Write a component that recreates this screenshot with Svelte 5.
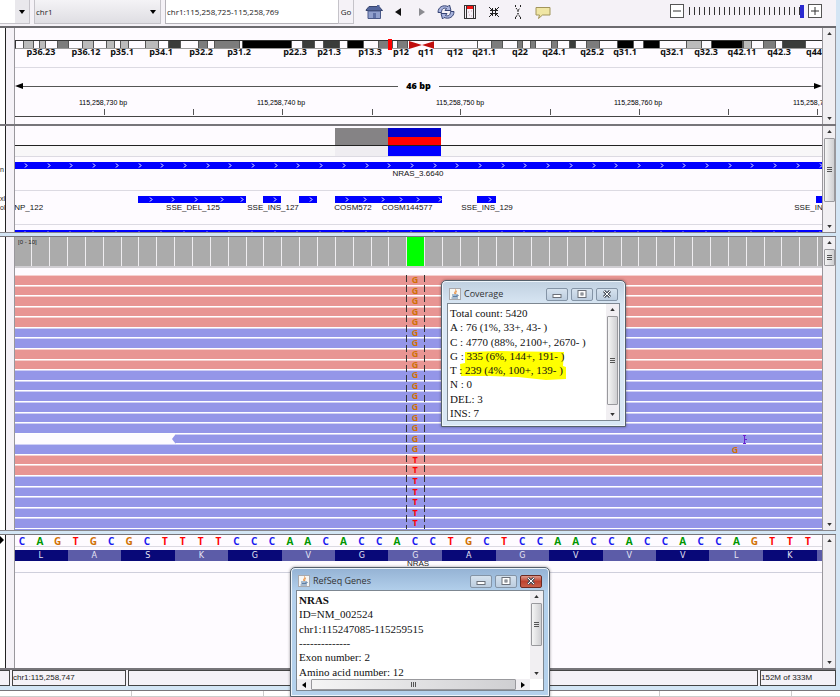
<script lang="ts">
  interface Feature {
    start: number;
    end: number;
    arrows: number[];
  }
  interface Mark {
    x: number;
    text: string;
  }

  // Track units: 807 across the visible locus.
  const SPAN = 807;
  const BASE = 17.86;
  const FIRST = -1.6;

  const pct = (x: number) => `${(x / SPAN) * 100}%`;
  const place = (start: number, end: number) => `left:${pct(start)};width:${pct(end - start)}`;

  let chromosome = $state('chr1');
  let locus = $state('chr1:115,258,725-115,258,769');
  let zoom = $state(22);

  const bands: [number, number, string][] = [
    [7, 18, 'light'], [23, 30, 'light'], [41, 53, 'mid'], [66, 78, 'light'], [90, 99, 'light'],
    [104, 113, 'light'], [129, 143, 'light'], [152, 165, 'dark'], [182, 192, 'mid'], [198, 224, 'mid'],
    [226, 276, 'black'], [286, 299, 'dark'], [307, 324, 'dark'], [331, 348, 'black'], [362, 377, 'mid'],
    [381, 392, 'mid'], [462, 463, 'mid'], [476, 488, 'mid'], [502, 508, 'mid'], [515, 521, 'mid'],
    [536, 543, 'mid'], [554, 561, 'dark'], [571, 585, 'mid'], [602, 619, 'black'], [628, 645, 'black'],
    [671, 687, 'light'], [696, 728, 'black'], [728, 737, 'light'], [748, 761, 'mid'], [767, 791, 'dark'],
  ];

  const bandNames: Mark[] = [
    { x: 26, text: 'p36.23' }, { x: 71, text: 'p36.12' }, { x: 107, text: 'p35.1' }, { x: 146, text: 'p34.1' },
    { x: 186, text: 'p32.2' }, { x: 224, text: 'p31.2' }, { x: 280, text: 'p22.3' }, { x: 314, text: 'p21.3' },
    { x: 355, text: 'p13.3' }, { x: 386, text: 'p12' }, { x: 411, text: 'q11' }, { x: 440, text: 'q12' },
    { x: 469, text: 'q21.1' }, { x: 505, text: 'q22' }, { x: 539, text: 'q24.1' }, { x: 577, text: 'q25.2' },
    { x: 610, text: 'q31.1' }, { x: 657, text: 'q32.1' }, { x: 691, text: 'q32.3' }, { x: 727, text: 'q42.11' },
    { x: 764, text: 'q42.3' }, { x: 799, text: 'q44' },
  ];

  const positions: Mark[] = [
    { x: 88, text: '115,258,730 bp' },
    { x: 266, text: '115,258,740 bp' },
    { x: 445, text: '115,258,750 bp' },
    { x: 623, text: '115,258,760 bp' },
    { x: 802, text: '115,258,770 bp' },
  ];
  const ticks = [89, 178, 267, 357, 445, 535, 624, 713, 802];

  const wholeGene: Feature = {
    start: 0,
    end: SPAN,
    arrows: Array.from({ length: 36 }, (_, i) => 9 + i * 22.7),
  };
  const mutations: Feature[] = [
    { start: 123, end: 231, arrows: [134, 156, 179, 205, 225] },
    { start: 248, end: 266, arrows: [258] },
    { start: 284, end: 302, arrows: [294] },
    { start: 320, end: 427, arrows: [330, 348, 366, 384, 401, 423] },
    { start: 462, end: 481, arrows: [473] },
    { start: 801, end: 807, arrows: [] },
  ];
  const mutationNames: Mark[] = [
    { x: 11, text: 'SNP_122' }, { x: 178, text: 'SSE_DEL_125' }, { x: 258, text: 'SSE_INS_127' },
    { x: 338, text: 'COSM572' }, { x: 392, text: 'COSM144577' }, { x: 472, text: 'SSE_INS_129' },
    { x: 805, text: 'SSE_INS_130' },
  ];

  const sequence = [...'CAGTGCGCTTTTCCCAACACCACCTGCTCCAACCACCACCAGTTT'];
  const aminoAcids = [...'LASKGVGGAGVVVLK '];
  const dividers = Array.from({ length: 46 }, (_, i) => FIRST + i * BASE).slice(1);

  // r = negative strand colour, b = positive strand colour
  const reads = [...'rrrrrbbrrbbbbbbbbrrbbbbb'].map((strand, i) => ({
    strand,
    base: i < 17 ? 'G' : 'T',
    start: i === 15 ? 157 : 0,
  }));

  const coverage = [
    'Total count: 5420',
    'A : 76 (1%, 33+, 43- )',
    'C : 4770 (88%, 2100+, 2670- )',
    'G : 335 (6%, 144+, 191- )',
    'T : 239 (4%, 100+, 139- )',
    'N : 0',
    'DEL: 3',
    'INS: 7',
  ];
  const gene = ['ID=NM_002524', 'chr1:115247085-115259515', '--------------', 'Exon number: 2', 'Amino acid number: 12'];
</script>

{#snippet bar(feature: Feature)}
  <div class="bar" style={place(feature.start, feature.end)}></div>
  {#each feature.arrows as x}
    <svg class="chevron" style={`left:${pct(x)}`} viewBox="0 0 4 5"><path d="M1 0.5 3 2.5 1 4.5" /></svg>
  {/each}
{/snippet}

{#snippet scrollbar(thumb: string)}
  <div class="scroll {thumb}">
    <svg viewBox="0 0 6 4"><path d="M0 4 3 0 6 4Z" /></svg>
    {#if thumb !== 'none'}<div class="thumb"><i></i></div>{/if}
    <svg class="last" viewBox="0 0 6 4"><path d="M0 0H6L3 4Z" /></svg>
  </div>
{/snippet}

{#snippet titlebar(title: string)}
  <header>
    <svg class="java" viewBox="0 0 12 12">
      <rect x="0.5" y="0.5" width="11" height="11" fill="#f7f7f5" stroke="#a9a9ad" />
      <path d="M6.500 1.500C8 3 4.500 4 6 6M7.800 3C6.300 4 7.200 5 6.500 6" fill="none" stroke="#e8842c" />
      <path d="M3 7H8V8.500H3.500M8 7C10 6.500 9.500 8.500 7.500 8.500M2.500 10H9" fill="none" stroke="#5b7ea6" />
    </svg>
    <h2>{title}</h2>
    <button aria-label="Minimize"><svg viewBox="0 0 10 8"><rect x="1" y="4.500" width="8" height="3" /></svg></button>
    <button aria-label="Maximize"><svg viewBox="0 0 10 8"><rect x="1" y="0.500" width="8" height="7" /><rect x="4" y="3" width="2" height="2" /></svg></button>
    <button class="close" aria-label="Close">
      <svg viewBox="0 0 10 8"><path class="edge" d="M2 1 8 7M8 1 2 7" /><path class="cross" d="M2 1 8 7M8 1 2 7" /></svg>
    </button>
  </header>
{/snippet}

<div class="app">
  <nav class="toolbar">
    <div class="field genome">
      <select aria-label="Genome"><option></option></select>
      <svg viewBox="0 0 6 4"><path d="M0 0H6L3 4Z" /></svg>
    </div>
    <div class="field chromosome">
      <select aria-label="Chromosome" bind:value={chromosome}><option>chr1</option></select>
      <svg viewBox="0 0 6 4"><path d="M0 0H6L3 4Z" /></svg>
    </div>
    <input class="locus" type="text" aria-label="Locus" bind:value={locus} />
    <button class="go">Go</button>
    <div class="tools">
      <button aria-label="Home">
        <svg viewBox="0 0 18 16">
          <path d="M1 6 4 2.500H14L17.500 6.500H1Z" fill="#52659c" stroke="#39466f" />
          <path d="M12 1H14.500V4H12Z" fill="#52659c" />
          <path d="M3 7H15.500V14.500H3Z" fill="#91a0cd" stroke="#4a5989" />
          <path d="M8 9H11V14H8Z" fill="#5f70a5" />
        </svg>
      </button>
      <button aria-label="Back"><svg viewBox="0 0 18 16"><path d="M6 8 12 4V12Z" fill="#111" /></svg></button>
      <button aria-label="Forward"><svg viewBox="0 0 18 16"><path d="M12 8 6 4V12Z" fill="#8b8b90" /></svg></button>
      <button aria-label="Refresh">
        <svg viewBox="0 0 18 16" fill="#a8b3dd" stroke="#374575">
          <path d="M1 8.500C1 3 6 .5 11 2.500L12.500 1 14 6.500 8 6.500 9.500 4.500C6.500 3.500 4.500 5 4.500 8.500Z" />
          <path d="M17 7.500C17 13 12 15.500 7 13.500L5.500 15 4 9.500H10L8.500 11.500C11.500 12.500 13.500 11 13.500 7.500Z" />
        </svg>
      </button>
      <button aria-label="Region of interest">
        <svg viewBox="0 0 18 16">
          <rect x="3.500" y="1.500" width="11" height="13" fill="#f6f2f8" stroke="#333" />
          <path d="M5.500 2V14.500M12.500 2V14.500" stroke="#333" />
          <rect x="6" y="2" width="6" height="3" fill="#f21414" />
          <path d="M7 8H8M10 7H11M8 11H9M10 12H11" stroke="#c8a0b0" />
        </svg>
      </button>
      <button aria-label="Fit to window">
        <svg viewBox="0 0 18 16" fill="none" stroke="#222">
          <path d="M4 3 7.500 6.500M14 3 10.500 6.500M4 13 7.500 9.500M14 13 10.500 9.500M5 6.500H7.500V4M13 6.500H10.500V4M5 9.500H7.500V12M13 9.500H10.500V12M7.500 6.500H10.500V9.500H7.500Z" />
        </svg>
      </button>
      <button aria-label="Popup behaviour">
        <svg viewBox="0 0 18 16" fill="none" stroke="#222">
          <path d="M6.500 1V3M11.500 1V3M7 4 9 6.500 11 4M9 6V10M7 13 9 9.500 11 13M6.500 13V15M11.500 13V15" stroke-dasharray="2 1" />
        </svg>
      </button>
      <button aria-label="Comment">
        <svg viewBox="0 0 18 16"><path d="M3 3.500H17V11H9.500L5.500 14.500 6.500 11H3Z" fill="#f0e6a4" stroke="#a2955a" /></svg>
      </button>
    </div>
    <div class="zoom">
      <button aria-label="Zoom out"><svg viewBox="0 0 12 12"><path d="M2 6H10" /></svg></button>
      <input type="range" min="0" max="22" aria-label="Zoom" bind:value={zoom} />
      <button aria-label="Zoom in"><svg viewBox="0 0 12 12"><path d="M2 6H10M6 2V10" /></svg></button>
    </div>
  </nav>

  <section class="panel header">
    <div class="names"></div>
    <div class="gutter"></div>
    <div class="tracks">
      <div class="ideogram">
        <div class="chromatid">
          {#each bands as [start, end, shade]}
            <div class="band {shade}" style={place(start, end)}></div>
          {/each}
          <svg class="centromere" style={place(393, 419)} viewBox="0 0 26 8" preserveAspectRatio="none">
            <path d="M0 0H26V8H0Z" fill="#fefbff" /><path d="M0 0 13 4 0 8ZM26 0 13 4 26 8Z" fill="#c00d0d" />
          </svg>
          <div class="here" style={place(372, 376)}></div>
        </div>
        {#each bandNames as name}
          <span class="label" style={`left:${pct(name.x)}`}>{name.text}</span>
        {/each}
      </div>
      <div class="ruler">
        <div class="span">
          <svg viewBox="0 0 8 6"><path d="M0 3 8 0V6Z" /></svg>
          <i></i><b>46 bp</b><i></i>
          <svg viewBox="0 0 8 6"><path d="M8 3 0 0V6Z" /></svg>
        </div>
        <div class="scale">
          {#each positions as pos}
            <span class="label" style={`left:${pct(pos.x)}`}>{pos.text}</span>
          {/each}
          {#each ticks as x}
            <i class="tick" style={`left:${pct(x)}`}></i>
          {/each}
        </div>
      </div>
    </div>
    {@render scrollbar('none')}
  </section>

  <section class="panel features">
    <div class="names">
      <span class="n1">n</span>
      <span class="n2">xl</span>
      <span class="n3">ol</span>
    </div>
    <div class="gutter"></div>
    <div class="tracks">
      <div class="heat">
        <div class="grey" style={place(320, 373)}></div>
        <div class="hot" style={place(373, 426)}></div>
      </div>
      <div class="row">
        {@render bar(wholeGene)}
        <span class="label" style={`left:${pct(403)}`}>NRAS_3.6640</span>
      </div>
      <div class="row">
        {#each mutations as feature}
          {@render bar(feature)}
        {/each}
        {#each mutationNames as name}
          <span class="label" style={`left:${pct(name.x)}`}>{name.text}</span>
        {/each}
      </div>
      <div class="row cut">{@render bar(wholeGene)}</div>
    </div>
    {@render scrollbar('mid')}
  </section>

  <section class="panel alignments">
    <div class="names"></div>
    <div class="gutter"></div>
    <div class="tracks">
      <div class="depth">
        {#each dividers as x}
          <i style={`left:${pct(x)}`}></i>
        {/each}
        <div class="variant" style={place(392, 409)}></div>
        <span>[0 - 10]</span>
      </div>
      <div class="reads">
        {#each reads as read}
          <div class="read">
            <div class="body {read.strand}" class:tip={read.start > 0} style={`margin-left:${pct(read.start)}`}></div>
            <b class={read.base} style={`left:${pct(400)}`}>{read.base}</b>
          </div>
        {/each}
        <div class="guides" style={place(391, 410)}></div>
        <svg class="insertion" style={`left:${pct(728)}`} viewBox="0 0 4 9"><path d="M0 .5H3M0 8.500H3M1.500 0V9M2 4.500H4" /></svg>
        <b class="G mismatch" style={`left:${pct(720)}`}>G</b>
      </div>
      <div class="more"></div>
    </div>
    {@render scrollbar('top')}
  </section>

  <section class="panel sequence">
    <div class="names"><svg class="strand" viewBox="0 0 4 8"><path d="M0 0 4 4 0 8Z" /></svg></div>
    <div class="gutter"></div>
    <div class="tracks">
      <div class="bases">
        {#each sequence as base, i}
          <b class={base} style={`left:${pct(7 + i * BASE)}`}>{base}</b>
        {/each}
      </div>
      <div class="acids">
        {#each aminoAcids as acid, i}
          <span style={place(i * 53.5 - 1, (i + 1) * 53.5 - 1)}>{acid}</span>
        {/each}
      </div>
      <div class="gene"><span class="label" style={`left:${pct(403)}`}>NRAS</span></div>
    </div>
    {@render scrollbar('none')}
  </section>

  <footer class="status">
    <span class="stub"></span>
    <span class="cursor">chr1:115,258,747</span>
    <span class="message"></span>
    <span class="memory">152M of 333M</span>
  </footer>
  <div class="sheet"></div>

  <article class="dialog coverage">
    {@render titlebar('Coverage')}
    <div class="pane">
      <div class="text">
        <svg class="marker" viewBox="0 0 108 30">
          <path d="M5 2 40 1 104 2 103 16 106 17 106 29 86 30 58 27 30 26 1 26 0 14 5 13Z" />
        </svg>
        {#each coverage as line}<p>{line}</p>{/each}
      </div>
      {@render scrollbar('long')}
    </div>
  </article>

  <article class="dialog refseq">
    {@render titlebar('RefSeq Genes')}
    <div class="pane">
      <div class="text">
        <p><b>NRAS</b></p>
        {#each gene as line}<p>{line}</p>{/each}
      </div>
      {@render scrollbar('short')}
      <div class="hscroll">
        <svg viewBox="0 0 4 6"><path d="M4 0V6L0 3Z" /></svg>
        <div class="thumb"><i></i></div>
        <svg viewBox="0 0 4 6"><path d="M0 0V6L4 3Z" /></svg>
      </div>
    </div>
  </article>
</div>

<style>
  :global(body) {
    background: #d3e5f4;
  }
  .app {
    --paper: #fefbff;
    --chrome: #f5f2f7;
    --line: #dcdae2;
    position: relative;
    display: flex;
    flex-direction: column;
    min-height: 100vh;
    overflow: hidden;
    font: 8px/10px 'Liberation Sans', Arial, sans-serif;
    color: #222;
  }
  button, input, select {
    font: inherit;
    color: inherit;
    margin: 0;
    padding: 0;
    border: 0;
    border-radius: 0;
    background: none;
  }
  svg { display: block; }

  /* toolbar */
  .toolbar {
    display: flex;
    height: 26px;
    margin-right: 4px;
    background: var(--chrome);
    border-bottom: 2px solid #6c6b6f;
    font: 8px/12px 'Open Sans', Tahoma, sans-serif;
  }
  .field {
    position: relative;
    height: 24px;
    border-bottom: 1px solid #c5c3c9;
    border-right: 1px solid #c5c3c9;
    box-sizing: border-box;
    background: linear-gradient(#f4f3f6, #dfdee3);
  }
  .field select {
    appearance: none;
    width: 100%;
    height: 100%;
    padding-left: 1px;
  }
  .field svg {
    position: absolute;
    right: 4px;
    top: 10px;
    width: 6px;
    height: 4px;
    pointer-events: none;
  }
  .genome { width: 30px; background: linear-gradient(90deg, #fff 15px, #e9e8ec 15px); }
  .chromosome { width: 127px; margin-left: 4px; border-left: 1px solid #c5c3c9; }
  .locus {
    width: 173px;
    height: 24px;
    margin-left: 4px;
    box-sizing: border-box;
    padding-left: 1px;
    background: #fff;
    border-left: 1px solid #b5b3b9;
    border-bottom: 1px solid #b5b3b9;
  }
  .go {
    width: 16px;
    height: 24px;
    border: solid #c5c3c9;
    border-width: 0 1px 1px;
  }
  .tools { display: flex; margin-left: 8px; }
  .tools button { width: 24px; height: 23px; display: grid; place-items: center; }
  .tools svg { width: 18px; height: 16px; }
  .zoom {
    display: flex;
    align-items: center;
    gap: 4px;
    margin: 0 14px 0 auto;
    height: 22px;
  }
  .zoom button { border: 1px solid #555; background: #fff; }
  .zoom svg { width: 12px; height: 12px; stroke: #333; }
  .zoom input {
    appearance: none;
    width: 116px;
    height: 14px;
    background: repeating-linear-gradient(90deg, #333 0 1px, transparent 1px 5px) 1px 3px / 111px 8px no-repeat;
  }
  .zoom input::-webkit-slider-thumb {
    appearance: none;
    width: 4px;
    height: 13px;
    background: #2a2ad0;
  }

  /* panels */
  .panel {
    display: grid;
    grid-template-columns: 6px 9px 1fr 14px;
    margin-right: 4px;
    background: var(--paper);
    border-bottom: 2px solid #77757a;
  }
  .names {
    position: relative;
    overflow: hidden;
    background: #fff;
    border-right: 1px solid #222;
    font-size: 7px;
  }
  .names span { position: absolute; left: 0; }
  .n1 { top: 39px; }
  .n2 { top: 68px; }
  .n3 { top: 77px; }
  .strand { width: 4px; height: 8px; margin-top: 1px; }
  .gutter { background: var(--chrome); border-right: 1px solid #99979c; }
  .tracks { position: relative; overflow: hidden; min-width: 0; }
  .label {
    position: absolute;
    transform: translateX(-50%);
    white-space: nowrap;
  }

  .ideogram {
    position: relative;
    height: 39px;
    border-bottom: 1px solid var(--line);
    font-family: 'Open Sans', sans-serif;
    font-weight: 700;
    font-size: 9px;
    color: #111;
  }
  .ideogram .label { top: 19px; }
  .chromatid {
    position: relative;
    top: 12px;
    height: 7px;
    border: 1px solid #333;
    border-width: 1px 0 1px 1px;
    border-bottom-color: #999;
  }
  .band { position: absolute; height: 7px; box-shadow: inset 1px 0 #555, inset -1px 0 #555; }
  .light { background: #bbb; }
  .mid { background: #7c7c7c; }
  .dark { background: #3a3c3a; }
  .black { background: #000; }
  .centromere { position: absolute; height: 8px; }
  .here { position: absolute; top: -2px; height: 11px; background: #f00; }
  .span {
    display: flex;
    align-items: center;
    height: 10px;
    padding-top: 13px;
    font: 700 9px/10px 'Open Sans', sans-serif;
    color: #000;
  }
  .span i { flex: 1; height: 1px; background: #555; }
  .span b { padding: 0 8px; }
  .span svg { width: 8px; height: 6px; }
  .scale {
    position: relative;
    height: 25px;
    margin-bottom: 7px;
    border-bottom: 1px solid #444;
    font-size: 7px;
    color: #000;
  }
  .scale .label { top: 7px; }
  .tick { position: absolute; bottom: 1px; width: 1px; height: 6px; background: #555; }

  .heat {
    position: relative;
    height: 30px;
    border-bottom: 1px solid var(--line);
    background: linear-gradient(transparent 19px, #222 19px 20px, #f8f7f8 20px);
  }
  .grey, .hot { position: absolute; top: 2px; height: 28px; }
  .grey { background: linear-gradient(#858385 17px, #222 17px 18px, #efedf1 18px); }
  .hot { background: linear-gradient(#00c 9px, #f00 9px 17px, #222 17px 18px, #00f 18px); }
  .row { position: relative; height: 33px; border-bottom: 1px solid var(--line); color: #111; }
  .row .label { top: 12px; }
  .row.cut { height: 7px; border: 0; overflow: hidden; }
  .bar { position: absolute; top: 5px; height: 7px; background: #00f; }
  .chevron {
    position: absolute;
    top: 6px;
    width: 4px;
    height: 5px;
    fill: none;
    stroke: #fff;
  }

  .features, .alignments { border-bottom: 1px solid #88868b; margin-bottom: 3px; }
  .alignments, .sequence { border-top: 1px solid #77757a; }
  .depth { position: relative; height: 29px; background: #ababab; border-bottom: 2px solid #d0ced2; }
  .depth i { position: absolute; width: 1px; height: 29px; background: #efedf0; }
  .depth span { position: absolute; left: 3px; top: 0; font-size: 6px; }
  .variant { position: absolute; height: 29px; background: #0f0; }
  .reads {
    position: relative;
    display: grid;
    grid-auto-rows: 1fr;
    height: 254px;
    margin-top: 7px;
  }
  .read { position: relative; display: grid; min-height: 0; }
  .body { border-bottom: 1px solid #fff; box-shadow: inset 0 1px rgba(255, 255, 255, 0.55); }
  .body.r { background: #e89593; }
  .body.b { background: #9496e8; }
  .body.tip { clip-path: polygon(4px 0, 100% 0, 100% 100%, 4px 100%, 0 50%); }
  .read b, .mismatch {
    position: absolute;
    transform: translateX(-50%);
    font: 700 9px/10px 'Open Sans', sans-serif;
  }
  .reads .mismatch { bottom: 74px; }
  .G { color: #d17105; }
  .T { color: #f00; }
  .A { color: #009600; }
  .C { color: #1a1af0; }
  .guides {
    position: absolute;
    top: 0;
    bottom: 0;
    background:
      repeating-linear-gradient(#333 0 7px, transparent 7px 10px) left / 1px 100% no-repeat,
      repeating-linear-gradient(#333 0 7px, transparent 7px 10px) right / 1px 100% no-repeat;
  }
  .insertion { position: absolute; top: 160px; width: 4px; height: 9px; stroke: #6a20d0; }
  .more { height: 1px; background: #9496e8; }

  .sequence { flex: 1; }
  .bases { position: relative; height: 11px; border-bottom: 1px solid var(--line); }
  .bases b {
    position: absolute;
    transform: translateX(-50%);
    font: 700 10px/13px 'Open Sans', sans-serif;
  }
  .acids { position: relative; height: 11px; margin-top: 3px; overflow: hidden; background: #5c5ca8; }
  .acids span {
    position: absolute;
    height: 11px;
    text-align: center;
    font: 8px/11px 'DejaVu Sans', sans-serif;
    color: #e6e6f5;
  }
  .acids span:nth-child(odd) { background: #080878; }
  .gene { position: relative; height: 11px; border-bottom: 1px solid #cfcfdc; }
  .gene .label { top: -2px; }

  /* scrollbars */
  .scroll {
    display: flex;
    flex-direction: column;
    align-items: center;
    box-sizing: border-box;
    padding: 4px 0;
    background: #f1eff2;
    border: solid #99979c;
    border-width: 0 1px;
  }
  .scroll > svg { width: 5px; height: 3px; fill: #333; flex: none; }
  .scroll .last { margin-top: auto; }
  .thumb {
    display: grid;
    place-items: center;
    box-sizing: border-box;
    width: 11px;
    margin-top: 5px;
    background: linear-gradient(90deg, #f5f5f5, #cfcfd2);
    border: 1px solid #99999d;
    border-radius: 1px;
  }
  .thumb i { width: 5px; height: 6px; background: repeating-linear-gradient(#555 0 1px, transparent 1px 2px); }
  .mid .thumb { height: 64px; }
  .top .thumb { height: 17px; }
  .long .thumb { height: 89px; }
  .short .thumb { height: 43px; }

  /* status bar */
  .status {
    display: flex;
    gap: 2px;
    height: 16px;
    margin-right: 4px;
    background: var(--chrome);
  }
  .status span { box-sizing: border-box; border: 1px solid #444; line-height: 14px; white-space: nowrap; }
  .status .stub { width: 10px; border-left: 0; }
  .cursor { width: 114px; }
  .message { flex: 1; }
  .memory { width: 76px; }
  .sheet {
    height: 5px;
    margin-top: 4px;
    background: repeating-linear-gradient(90deg, transparent 0 131px, #ccc 131px 132px), #fff;
    border-top: 1px solid #77757a;
    border-bottom: 1px solid #ccc;
  }

  /* floating windows */
  .dialog {
    position: absolute;
    box-sizing: border-box;
    padding: 0 5px 5px;
    border: 1px solid #55606b;
    border-radius: 5px 5px 0 0;
    box-shadow: inset 0 0 0 1px #eef5fb, 0 0 3px rgba(0, 0, 0, 0.4);
  }
  .coverage { left: 441px; top: 280px; width: 185px; background: linear-gradient(#c0d0e0, #d9e7f4 24px); }
  .refseq { left: 290px; top: 567px; width: 260px; background: linear-gradient(#94b2d4, #b4d1ec 24px); }
  .dialog header {
    display: flex;
    align-items: center;
    gap: 3px;
    height: 22px;
    padding: 4px 2px 0;
    box-sizing: border-box;
  }
  .java { width: 12px; height: 12px; }
  h2 {
    flex: 1;
    margin: 0;
    font: 9px/12px 'Open Sans', sans-serif;
    white-space: nowrap;
    color: #333;
  }
  .dialog button {
    display: grid;
    place-items: center;
    width: 22px;
    height: 13px;
    box-sizing: border-box;
    border: 1px solid #8494a6;
    border-radius: 2px;
    background: linear-gradient(#d6e2ee, #bccddf);
  }
  .dialog button svg { width: 10px; height: 8px; fill: #fff; stroke: #6b7079; }
  .dialog .edge { stroke: #4e5560; stroke-width: 3; }
  .dialog .cross { stroke: #fff; stroke-width: 1; }
  .dialog.refseq .close { background: linear-gradient(#dd9a8c, #bf4330 50%, #c8604a); border-color: #6d2a22; }
  .pane {
    display: grid;
    grid-template-columns: 1fr 13px;
    background: #fff;
    border: 1px solid #7d8791;
  }
  .text {
    position: relative;
    display: grid;
    grid-auto-rows: 1fr;
    height: 114px;
    padding: 2px 0 0 2px;
    overflow: hidden;
    font: 11px/14px 'Liberation Serif', 'Times New Roman', serif;
    color: #111;
  }
  .text p { position: relative; margin: 0; white-space: nowrap; }
  .refseq .text { height: 86px; }
  .marker { position: absolute; left: 12px; top: 46px; width: 108px; height: 30px; fill: #ff0; }
  .pane .scroll { border: 0; }
  .hscroll {
    display: flex;
    align-items: center;
    gap: 5px;
    height: 11px;
    padding: 0 5px;
    background: #f1eff2;
  }
  .hscroll svg { width: 4px; height: 6px; }
  .hscroll .thumb { flex: 1; height: 11px; margin: 0; }
  .hscroll i { width: 6px; height: 5px; background: repeating-linear-gradient(90deg, #555 0 1px, transparent 1px 2px); }
</style>
